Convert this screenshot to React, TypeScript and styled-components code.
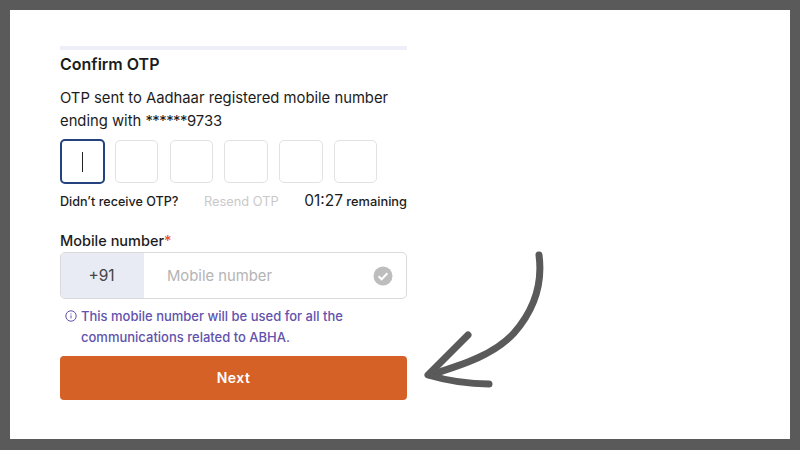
import styled, { createGlobalStyle } from 'styled-components';

const GlobalStyle = createGlobalStyle`
    html, body {
        margin: 0;
        padding: 0;
        background: #fff;
    }
    * {
        box-sizing: border-box;
    }
`;

const Frame = styled.div`
    position: relative;
    width: 800px;
    height: 450px;
    overflow: hidden;
    background: #fff;
    border: 10px solid #5a5a5a;
    border-bottom-width: 11px;
    padding: 36px 0 0 50px;
    font-family: Inter, "Liberation Sans", sans-serif;
    color: #1c1c1c;
`;

const Form = styled.div`
    width: 347px;
    display: flex;
    flex-direction: column;
`;

const Progress = styled.div`
    height: 4px;
    background: #eeeef9;
`;

const Title = styled.h1`
    margin: 4px 0 0;
    font-size: 16px;
    line-height: 20px;
    font-weight: 600;
`;

const Lead = styled.p`
    margin: 13px 0 0;
    font-size: 14.8px;
    line-height: 23px;
    font-weight: 400;
`;

const Masked = styled.span`
    letter-spacing: -0.5px;
`;

const OtpRow = styled.div`
    display: flex;
    gap: 11.3px;
    margin-top: 6px;
`;

const OtpBox = styled.div<{ $active?: boolean }>`
    width: ${p => (p.$active ? '44.5px' : '43.5px')};
    height: ${p => (p.$active ? '45px' : '43px')};
    margin-top: ${p => (p.$active ? '0' : '1px')};
    margin-right: ${p => (p.$active ? '-1px' : '0')};
    border-radius: 5px;
    border: ${p => (p.$active ? '2px solid #23427f' : '1px solid #e2e2e2')};
    display: flex;
    align-items: center;
    justify-content: center;
`;

const Caret = styled.span`
    width: 1px;
    height: 20px;
    background: #222;
`;

const ResendRow = styled.div`
    display: flex;
    align-items: baseline;
    justify-content: space-between;
    margin-top: 8px;
    font-size: 12.6px;
    line-height: 18px;
    font-weight: 500;
`;

const Resend = styled.span`
    color: #c9c9c9;
    font-size: 12.8px;
    font-weight: 400;
`;

const Timer = styled.span`
    white-space: nowrap;
    font-size: 12.8px;
    font-weight: 500;
    b {
        font-weight: 400;
        font-size: 15.5px;
    }
`;

const Label = styled.label`
    display: block;
    margin-top: 20px;
    font-size: 14.5px;
    line-height: 20px;
    font-weight: 500;
    em {
        font-style: normal;
        color: #e8501f;
    }
`;

const MobileField = styled.div`
    display: flex;
    align-items: stretch;
    height: 47px;
    margin-top: 1px;
    border: 1px solid #d9d9dc;
    border-radius: 5px;
    overflow: hidden;
`;

const Prefix = styled.div`
    width: 83px;
    padding-right: 2px;
    background: #e8ebf3;
    display: flex;
    align-items: center;
    justify-content: center;
    font-size: 15.5px;
    color: #444;
`;

const Placeholder = styled.div`
    flex: 1;
    display: flex;
    align-items: center;
    justify-content: space-between;
    padding: 0 13px 0 23px;
    font-size: 14.8px;
    color: #b4b4b4;
`;

const Hint = styled.div`
    display: flex;
    gap: 4px;
    margin-top: 7px;
    padding-left: 5px;
    font-size: 13px;
    line-height: 21px;
    font-weight: 500;
    color: #6252ac;
    svg {
        flex: none;
        margin-top: 4px;
    }
`;

const NextButton = styled.button`
    height: 44px;
    margin-top: 8px;
    padding-bottom: 2px;
    border: none;
    border-radius: 4px;
    background: #d66126;
    color: #fff;
    font-family: inherit;
    font-size: 14px;
    font-weight: 600;
    letter-spacing: 0.5px;
`;

const Arrow = styled.svg`
    position: absolute;
    left: 400px;
    top: 230px;
`;

export default function App() {
    return (
        <>
            <GlobalStyle />
            <Frame>
                <Form>
                    <Progress />
                    <Title>Confirm OTP</Title>
                    <Lead>
                        OTP sent to Aadhaar registered mobile number
                        <br />
                        ending with <Masked>******</Masked>9733
                    </Lead>
                    <OtpRow>
                        <OtpBox $active>
                            <Caret />
                        </OtpBox>
                        <OtpBox />
                        <OtpBox />
                        <OtpBox />
                        <OtpBox />
                        <OtpBox />
                    </OtpRow>
                    <ResendRow>
                        <span>Didn’t receive OTP?</span>
                        <Resend>Resend OTP</Resend>
                        <Timer>
                            <b>01:27</b> remaining
                        </Timer>
                    </ResendRow>
                    <Label>
                        Mobile number<em>*</em>
                    </Label>
                    <MobileField>
                        <Prefix>+91</Prefix>
                        <Placeholder>
                            Mobile number
                            <svg width="20" height="20" viewBox="0 0 20 20">
                                <circle cx="10" cy="10" r="9.5" fill="#bdbdbd" />
                                <path d="M5.6 10.2l3 3 5.8-6" fill="none" stroke="#fff" strokeWidth="2" />
                            </svg>
                        </Placeholder>
                    </MobileField>
                    <Hint>
                        <svg width="12" height="12" viewBox="0 0 12 12" fill="none" stroke="#6252ac">
                            <circle cx="6" cy="6" r="5.2" strokeWidth="1" />
                            <path d="M6 5.4v3M6 3.4v1" strokeWidth="1" />
                        </svg>
                        <span>
                            This mobile number will be used for all the
                            <br />
                            communications related to ABHA.
                        </span>
                    </Hint>
                    <NextButton>Next</NextButton>
                </Form>
                <Arrow width="150" height="160" viewBox="410 240 150 160">
                    <g fill="none" stroke="#5a5a5a" strokeWidth="7" strokeLinecap="round" strokeLinejoin="round">
                        <path d="M539 255 C543 285 534 310 514 333 C495 354 465 364 430 375" />
                        <path d="M468 335 L428 375 C445 380 465 384 489 384" />
                    </g>
                </Arrow>
            </Frame>
        </>
    );
}
